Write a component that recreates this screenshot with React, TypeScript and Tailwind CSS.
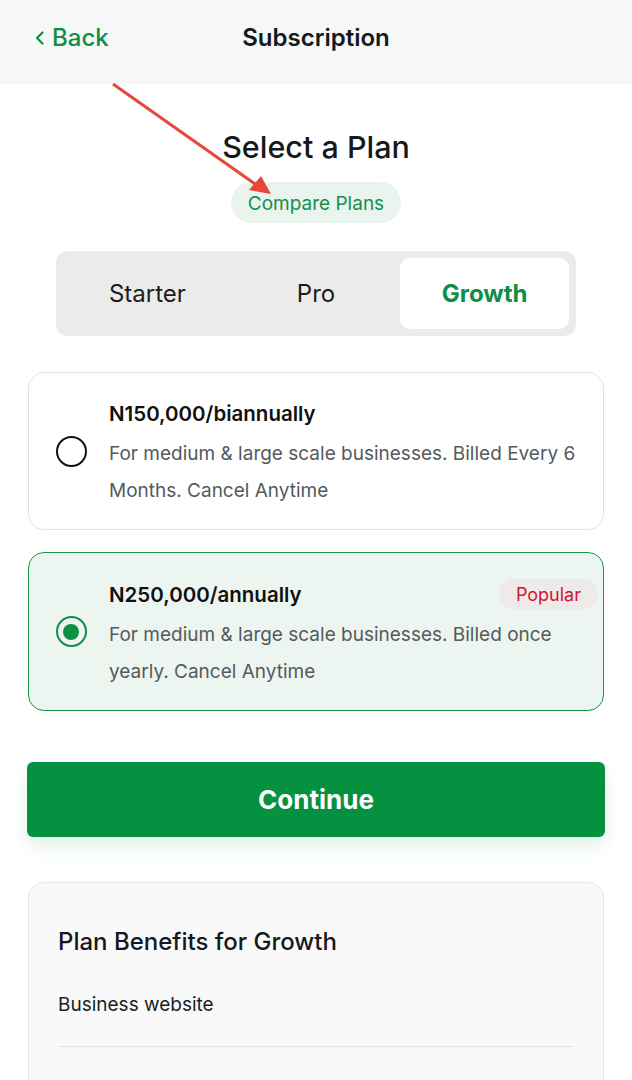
import React from "react";

const plans = [
  {
    price: "N150,000/biannually",
    desc: "For medium & large scale businesses. Billed Every 6 Months. Cancel Anytime",
    selected: false,
    popular: false,
  },
  {
    price: "N250,000/annually",
    desc: "For medium & large scale businesses. Billed once yearly. Cancel Anytime",
    selected: true,
    popular: true,
  },
];

export default function App() {
  return (
    <div className="relative min-h-[1080px] bg-white text-[#15191c] font-['Inter','Noto_Sans',sans-serif] overflow-hidden">
      {/* Header */}
      <header className="h-[84px] bg-[#f6f8f8] flex items-center px-[34px] pb-[8px]">
        <div className="flex items-center gap-[6px] text-[#0d8f45] text-[24px] font-medium w-[200px]">
          <svg width="12" height="16" viewBox="0 0 12 16" fill="none">
            <path d="M8.5 2.5 3 8l5.5 5.5" stroke="currentColor" strokeWidth="2.2" strokeLinecap="round" strokeLinejoin="round" />
          </svg>
          <span>Back</span>
        </div>
        <h1 className="absolute left-0 right-0 top-[20px] text-center text-[24px] font-semibold pointer-events-none">Subscription</h1>
      </header>

      <main className="flex flex-col items-center">
        <h2 className="mt-[44px] text-[30.5px] font-medium leading-[38px]">Select a Plan</h2>
        <button className="mt-[16px] h-[41px] px-[17px] pt-[3px] rounded-full bg-[#e9f4ee] text-[#14904a] text-[19px]">
          Compare Plans
        </button>

        {/* Tabs */}
        <div className="mt-[28px] w-[520px] h-[85px] rounded-[12px] bg-[#ebebeb] p-[7px] grid grid-cols-3 gap-0">
          <div className="flex items-center justify-center text-[24px] text-[#1c1c1c]">Starter</div>
          <div className="flex items-center justify-center text-[24px] text-[#1c1c1c]">Pro</div>
          <div className="flex items-center justify-center rounded-[10px] bg-white text-[24px] font-bold text-[#0d9044]">Growth</div>
        </div>

        {/* Plan cards */}
        <div className="mt-[36px] w-[576px] flex flex-col gap-[22px]">
          {plans.map((p) => (
            <div
              key={p.price}
              className={
                p.selected
                  ? "relative h-[159px] rounded-[16px] border-[1.5px] border-[#13994a] bg-[#edf5f0] flex items-center"
                  : "relative h-[158px] rounded-[16px] border border-[#e3e3e3] bg-white flex items-center"
              }
            >
              <div className="w-[80px] pl-[4px] flex justify-center shrink-0">
                {p.selected ? (
                  <div className="w-[31px] h-[31px] rounded-full border-[2.5px] border-[#0d9044] flex items-center justify-center">
                    <div className="w-[16px] h-[16px] rounded-full bg-[#0d9044]" />
                  </div>
                ) : (
                  <div className="w-[31px] h-[31px] rounded-full border-2 border-[#111]" />
                )}
              </div>
              <div className="pr-[24px] pt-[7px]">
                <div className="text-[20.5px] font-semibold leading-[28px] text-[#111]">{p.price}</div>
                <p className="mt-[7px] text-[19px] leading-[37px] text-[#555a5c]">{p.desc}</p>
              </div>
              {p.popular && (
                <span className="absolute right-[5px] top-[26px] h-[30px] px-[17px] rounded-full bg-[#efe9e9] text-[#d1152d] text-[18px] flex items-center">
                  Popular
                </span>
              )}
            </div>
          ))}
        </div>

        <button className="mt-[51px] w-[578px] h-[75px] rounded-[6px] bg-[#05913f] text-white text-[26px] font-bold shadow-[0_10px_18px_rgba(16,160,90,0.12)]">
          Continue
        </button>

        {/* Benefits */}
        <div className="mt-[45px] w-[576px] rounded-t-[16px] border border-[#e6e6e6] bg-[#f9f9f9] px-[29px] pt-[43px] pb-[40px]">
          <h3 className="text-[24px] font-medium leading-[32px] text-[#15191c]">Plan Benefits for Growth</h3>
          <div className="mt-[34px] text-[19px] leading-[26px] text-[#1c1f21] pb-[28px] border-b border-[#e2e2e2]">Business website</div>
        </div>
      </main>

      {/* annotation arrow */}
      <svg className="absolute left-0 top-0 pointer-events-none" width="632" height="240" viewBox="0 0 632 240">
        <line x1="113" y1="84" x2="258" y2="186" stroke="#e5473a" strokeWidth="3" />
        <polygon points="271,194 249,190 261,176" fill="#e5473a" />
      </svg>
    </div>
  );
}
